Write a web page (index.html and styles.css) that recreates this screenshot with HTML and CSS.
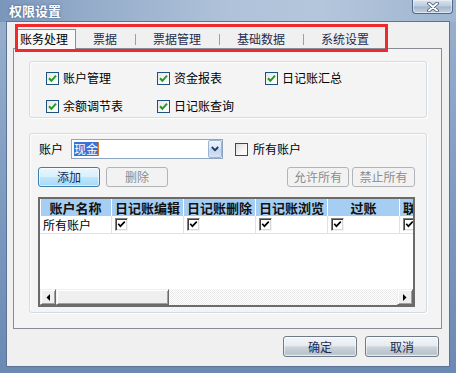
FILE: index.html
```html
<!DOCTYPE html>
<html lang="zh-CN">
<head>
<meta charset="utf-8">
<title>权限设置</title>
<link rel="stylesheet" href="styles.css">
</head>
<body>
<div class="window">
  <div class="titlebar">
    <span class="title">权限设置</span>
    <div class="close">
      <svg width="12" height="10" viewBox="0 0 12 10"><path d="M2 1.5L10 8.5M10 1.5L2 8.5" stroke="#3d5272" stroke-width="3.6" stroke-linecap="round"/><path d="M2 1.5L10 8.5M10 1.5L2 8.5" stroke="#fff" stroke-width="2" stroke-linecap="round"/></svg>
    </div>
  </div>
  <div class="client">
    <div class="tabs">
      <div class="tab active">账务处理</div>
      <div class="tab">票据</div>
      <span class="sep"></span>
      <div class="tab">票据管理</div>
      <span class="sep"></span>
      <div class="tab">基础数据</div>
      <span class="sep"></span>
      <div class="tab">系统设置</div>
      <div class="mark"></div>
    </div>
    <div class="panel">
      <div class="group perms">
        <label class="chk"><span class="vcb on"><svg width="9" height="9" viewBox="0 0 9 9"><path d="M1 4.2L3.4 6.8L8 1.6" stroke="#1f9e1f" stroke-width="2" fill="none"/></svg></span>账户管理</label>
        <label class="chk"><span class="vcb on"><svg width="9" height="9" viewBox="0 0 9 9"><path d="M1 4.2L3.4 6.8L8 1.6" stroke="#1f9e1f" stroke-width="2" fill="none"/></svg></span>资金报表</label>
        <label class="chk"><span class="vcb on"><svg width="9" height="9" viewBox="0 0 9 9"><path d="M1 4.2L3.4 6.8L8 1.6" stroke="#1f9e1f" stroke-width="2" fill="none"/></svg></span>日记账汇总</label>
        <label class="chk"><span class="vcb on"><svg width="9" height="9" viewBox="0 0 9 9"><path d="M1 4.2L3.4 6.8L8 1.6" stroke="#1f9e1f" stroke-width="2" fill="none"/></svg></span>余额调节表</label>
        <label class="chk"><span class="vcb on"><svg width="9" height="9" viewBox="0 0 9 9"><path d="M1 4.2L3.4 6.8L8 1.6" stroke="#1f9e1f" stroke-width="2" fill="none"/></svg></span>日记账查询</label>
      </div>
      <div class="group accounts">
        <div class="acct-row">
          <span class="acct-label">账户</span>
          <div class="combo">
            <span class="sel">现金</span><span class="caret"></span>
            <span class="drop"><svg width="8" height="6" viewBox="0 0 8 6"><path d="M0.8 1L4 4.2L7.2 1" stroke="#1e3a66" stroke-width="1.8" fill="none"/></svg></span>
          </div>
          <label class="chk all"><span class="vcb"></span>所有账户</label>
        </div>
        <div class="btn-row">
          <span class="btn focus">添加</span>
          <span class="btn disabled gap6">删除</span>
          <span class="spacer"></span>
          <span class="btn disabled">允许所有</span>
          <span class="btn disabled wide">禁止所有</span>
        </div>
        <div class="grid">
          <div class="grid-body">
            <div class="grow head">
              <div class="cell first">账户名称</div>
              <div class="cell">日记账编辑</div>
              <div class="cell">日记账删除</div>
              <div class="cell">日记账浏览</div>
              <div class="cell">过账</div>
              <div class="cell lead">联查</div>
            </div>
            <div class="grow data">
              <div class="cell text">所有账户</div>
              <div class="cell"><span class="ccb"><svg width="9" height="9" viewBox="0 0 9 9"><path d="M1.2 3.8L3.4 6.2L7.8 1.6" stroke="#000" stroke-width="1.7" fill="none"/></svg></span></div>
              <div class="cell"><span class="ccb"><svg width="9" height="9" viewBox="0 0 9 9"><path d="M1.2 3.8L3.4 6.2L7.8 1.6" stroke="#000" stroke-width="1.7" fill="none"/></svg></span></div>
              <div class="cell"><span class="ccb"><svg width="9" height="9" viewBox="0 0 9 9"><path d="M1.2 3.8L3.4 6.2L7.8 1.6" stroke="#000" stroke-width="1.7" fill="none"/></svg></span></div>
              <div class="cell"><span class="ccb"><svg width="9" height="9" viewBox="0 0 9 9"><path d="M1.2 3.8L3.4 6.2L7.8 1.6" stroke="#000" stroke-width="1.7" fill="none"/></svg></span></div>
              <div class="cell"><span class="ccb"><svg width="9" height="9" viewBox="0 0 9 9"><path d="M1.2 3.8L3.4 6.2L7.8 1.6" stroke="#000" stroke-width="1.7" fill="none"/></svg></span></div>
            </div>
          </div>
          <div class="hscroll">
            <span class="sbtn"><svg width="4" height="7" viewBox="0 0 4 7"><path d="M4 0V7L0.5 3.5Z" fill="#000"/></svg></span>
            <span class="thumb"></span>
            <span class="track"></span>
            <span class="sbtn"><svg width="4" height="7" viewBox="0 0 4 7"><path d="M0 0V7L3.5 3.5Z" fill="#000"/></svg></span>
          </div>
        </div>
      </div>
    </div>
    <div class="footer">
      <span class="btn vista">确定</span>
      <span class="btn vista">取消</span>
    </div>
  </div>
</div>
</body>
</html>
```
FILE: styles.css
```css
* { box-sizing: border-box; margin: 0; padding: 0; }
html, body { width: 456px; height: 373px; overflow: hidden; }
body {
  font-family: "Noto Sans CJK SC", "Noto Sans", sans-serif;
  font-size: 12px;
  color: #000;
  background: #fff;
}
.window {
  width: 456px;
  height: 373px;
  display: flex;
  flex-direction: column;
  background: linear-gradient(180deg, #9bb1cd 0%, #7f9cc2 50%, #6a8ab4 100%);
}
.titlebar {
  height: 22px;
  flex: none;
  display: flex;
  justify-content: space-between;
  align-items: flex-start;
  padding-left: 9px;
  background: linear-gradient(90deg, #7b96bb 0%, #93abc9 18%, #afc2d9 50%, #b4c6dc 70%, #9fb5d0 100%);
}
.title {
  color: #fff;
  font-weight: bold;
  font-size: 13px;
  line-height: 14px;
  margin-top: 4px;
  text-shadow: 0 0 3px #506d93, 0 0 1px #506d93;
}
.close {
  width: 41px;
  height: 14px;
  margin-right: 3px;
  border: 1px solid #4f6a8e;
  border-top: none;
  border-radius: 0 0 4px 4px;
  background: linear-gradient(180deg, #dbe3ed 0%, #bccbdd 48%, #a3b6cd 52%, #c3d2e3 100%);
  box-shadow: inset 0 0 0 1px rgba(255, 255, 255, 0.45);
  display: flex;
  align-items: center;
  justify-content: center;
}
.client {
  flex: 1;
  margin: 0 7px 7px;
  background: #f0f0f0;
  display: flex;
  flex-direction: column;
  position: relative;
  box-shadow: 0 0 0 1px #5a7396;
}
.tabs {
  height: 26px;
  flex: none;
  display: flex;
  align-items: flex-end;
  padding-left: 9px;
  position: relative;
}
.tab {
  height: 19px;
  line-height: 19px;
  padding: 0 18px 0 17px;
  color: #1c2d50;
  white-space: nowrap;
}
.tab.active {
  width: 60px;
  height: 20px;
  line-height: 18px;
  padding: 0 0 0 3px;
  margin-bottom: -1px;
  border: 1px solid #8b8e95;
  border-bottom: none;
  background: #f8f8f8;
  color: #000;
  position: relative;
  z-index: 1;
}
.sep {
  width: 1px;
  height: 11px;
  margin-bottom: 3px;
  background: #8da2bd;
  flex: none;
}
.mark {
  position: absolute;
  left: 8px;
  top: 2px;
  width: 373px;
  height: 28px;
  border: 3px solid #f0292c;
  z-index: 2;
}
.panel {
  flex: none;
  margin: 0 7px 0 6px;
  border: 1px solid #898c95;
  background: #f4f4f4;
  padding: 12px 14px 15px 15px;
  display: flex;
  flex-direction: column;
  gap: 15px;
}
.group {
  border: 1px solid #d3dbe3;
  border-radius: 3px;
  box-shadow: inset 1px 1px 0 #fff, 1px 1px 0 #fff;
}
.perms {
  height: 57px;
  display: grid;
  grid-template-columns: 111px 108px auto;
  grid-auto-rows: 14px;
  row-gap: 14px;
  padding: 9px 0 4px 16px;
}
.chk {
  display: flex;
  align-items: center;
  gap: 4px;
  height: 14px;
  line-height: 14px;
  white-space: nowrap;
}
.vcb {
  width: 13px;
  height: 13px;
  flex: none;
  border: 1px solid #1c5180;
  background: linear-gradient(135deg, #dcdcdc 0%, #f6f6f6 60%, #fff 100%);
  display: flex;
  align-items: center;
  justify-content: center;
}
.vcb.on { background: linear-gradient(135deg, #e6e6e6 0%, #fafafa 70%); }
.accounts {
  height: 180px;
  padding: 5px 11px 5px 8px;
  display: flex;
  flex-direction: column;
}
.acct-row {
  height: 20px;
  display: flex;
  align-items: center;
}
.acct-label {
  width: 24px;
  margin: 0 8px 0 1px;
  line-height: 14px;
}
.combo {
  width: 152px;
  height: 20px;
  border: 1px solid #8ea6c2;
  background: #fff;
  display: flex;
  align-items: center;
  padding-left: 2px;
}
.sel {
  background: #3a72d6;
  color: #fff;
  height: 14px;
  line-height: 14px;
}
.caret {
  width: 1px;
  height: 14px;
  background: #d8792f;
}
.drop {
  margin-left: auto;
  width: 14px;
  height: 18px;
  border: 1px solid #9db4d2;
  border-radius: 2px;
  background: linear-gradient(180deg, #eef4fb 0%, #d8e5f4 50%, #c3d6ee 52%, #d5e3f4 100%);
  display: flex;
  align-items: center;
  justify-content: center;
}
.chk.all { margin-left: 12px; gap: 5px; }
.btn-row {
  margin-top: 8px;
  height: 20px;
  display: flex;
}
.spacer { flex: 1; }
.btn {
  width: 62px;
  height: 20px;
  line-height: 18px;
  text-align: center;
  border: 1px solid #707070;
  border-radius: 3px;
  color: #1b2b52;
  flex: none;
}
.btn.gap6 { margin-left: 6px; }
.btn.wide { width: 63px; margin-left: 3px; }
.btn.focus {
  border-color: #3c7fb1;
  background: linear-gradient(180deg, #eaf6fd 0%, #d9f0fc 48%, #bee6fd 52%, #a7d9f5 100%);
  box-shadow: inset 0 0 0 1px rgba(255, 255, 255, 0.6);
}
.btn.disabled {
  border-color: #b2b5b8;
  background: #f2f2f2;
  color: #8c8c8c;
}
.grid {
  margin-top: 10px;
  height: 110px;
  border: 2px solid #6b6b6b;
  background: #fff;
  display: flex;
  flex-direction: column;
}
.grid-body {
  flex: 1;
  overflow: hidden;
}
.grow {
  display: flex;
  width: 432px;
}
.cell {
  width: 72px;
  flex: none;
  white-space: nowrap;
  overflow: hidden;
}
.head .cell {
  height: 17px;
  line-height: 17px;
  background: #a6cdf2;
  border-right: 1px solid #fff;
  text-align: center;
  font-weight: bold;
  font-size: 13px;
  color: #111;
}
.head .cell.first { box-shadow: inset 1px 0 0 #fff; }
.head .cell.lead { text-align: left; padding-left: 3px; }
.data .cell {
  height: 18px;
  line-height: 18px;
  border-right: 1px solid #e2e2e2;
  border-bottom: 1px solid #e2e2e2;
  padding-left: 3px;
  display: flex;
  align-items: center;
}
.ccb {
  width: 13px;
  height: 13px;
  border: 1px solid;
  border-color: #808080 #f4f4f4 #f4f4f4 #808080;
  box-shadow: inset 1px 1px 0 #404040, inset -1px -1px 0 #d8d8d8;
  background: #fff;
  display: flex;
  align-items: center;
  justify-content: center;
}
.hscroll {
  height: 16px;
  flex: none;
  display: flex;
}
.sbtn, .thumb {
  height: 16px;
  background: #efefef;
  border: 1px solid;
  border-color: #f0f0f0 #696969 #696969 #f0f0f0;
  box-shadow: inset 1px 1px 0 #fff, inset -1px -1px 0 #a0a0a0;
  flex: none;
}
.sbtn {
  width: 16px;
  display: flex;
  align-items: center;
  justify-content: center;
}
.thumb { width: 113px; }
.track {
  flex: 1;
  background-color: #fff;
  background-image: conic-gradient(#fff 25%, #ebebeb 0 50%, #fff 0 75%, #ebebeb 0);
  background-size: 2px 2px;
}
.footer {
  margin-top: 7px;
  padding-right: 10px;
  display: flex;
  justify-content: flex-end;
  gap: 8px;
}
.btn.vista {
  width: 74px;
  height: 21px;
  line-height: 19px;
  border-color: #6f7b88;
  background: linear-gradient(180deg, #f4f6f8 0%, #e7ebef 46%, #ccd4db 52%, #b9c3cb 88%, #d4dade 100%);
  box-shadow: inset 0 0 0 1px rgba(255, 255, 255, 0.55);
  color: #1a2a52;
}
```
